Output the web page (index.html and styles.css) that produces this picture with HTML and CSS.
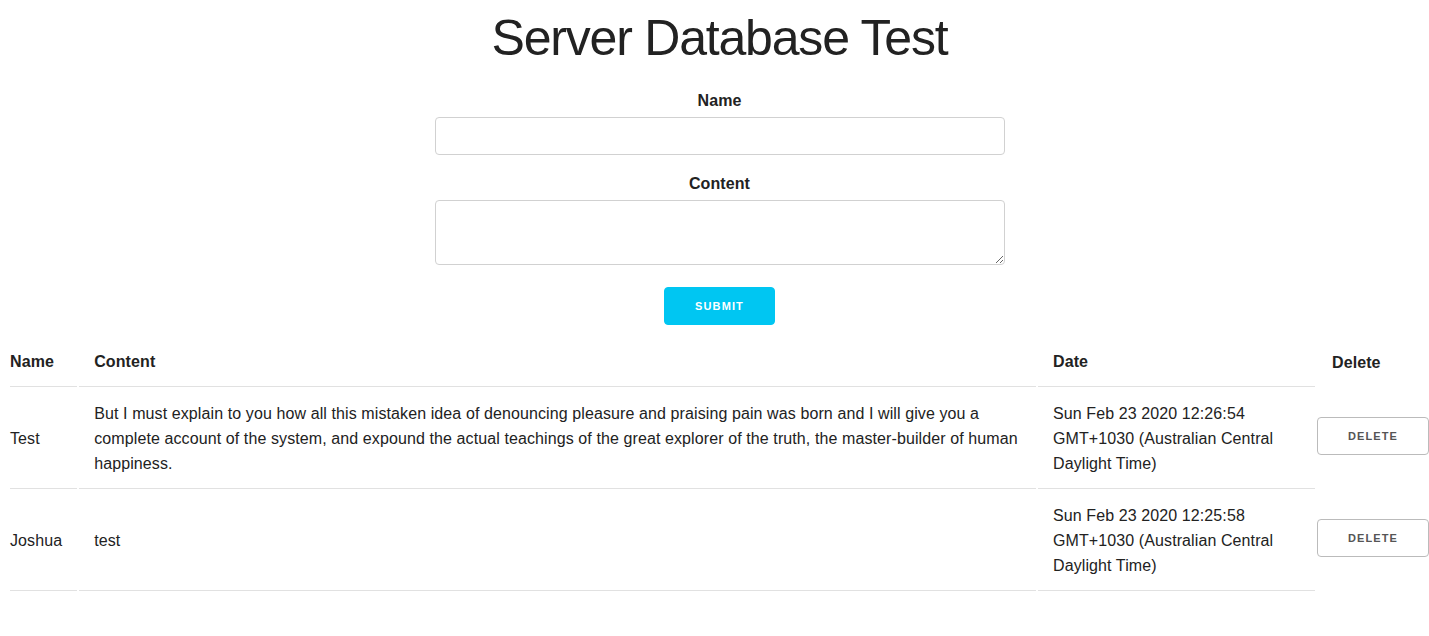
FILE: index.html
```html
<!DOCTYPE html>
<html lang="en">
<head>
<meta charset="utf-8">
<title>Server Database Test</title>
<link rel="stylesheet" href="styles.css">
</head>
<body>
<div class="page">
  <h1 class="title">Server Database Test</h1>
  <form class="entry-form">
    <label class="field-label" for="name">Name</label>
    <input class="field-input" id="name" type="text">
    <label class="field-label" for="content">Content</label>
    <textarea class="field-textarea" id="content"></textarea>
    <button class="btn btn-primary" type="button">Submit</button>
  </form>
  <table class="entries">
    <thead>
      <tr>
        <th class="col-name">Name</th>
        <th class="col-content">Content</th>
        <th class="col-date">Date</th>
        <th class="col-delete">Delete</th>
      </tr>
    </thead>
    <tbody>
      <tr>
        <td class="col-name">Test</td>
        <td class="col-content">But I must explain to you how all this mistaken idea of denouncing pleasure and praising pain was born and I will give you a complete account of the system, and expound the actual teachings of the great explorer of the truth, the master-builder of human happiness.</td>
        <td class="col-date">Sun Feb 23 2020 12:26:54 GMT+1030 (Australian Central Daylight Time)</td>
        <td class="col-delete"><button class="btn" type="button">Delete</button></td>
      </tr>
      <tr>
        <td class="col-name">Joshua</td>
        <td class="col-content">test</td>
        <td class="col-date">Sun Feb 23 2020 12:25:58 GMT+1030 (Australian Central Daylight Time)</td>
        <td class="col-delete"><button class="btn" type="button">Delete</button></td>
      </tr>
    </tbody>
  </table>
</div>
</body>
</html>
```
FILE: styles.css
```css
html {
  overflow: hidden;
}
body {
  margin: 0;
  font-family: "Liberation Sans", Arial, Helvetica, sans-serif;
  font-size: 16px;
  line-height: 24px;
  letter-spacing: 0.1px;
  color: #222;
  background: #fff;
}
.page {
  width: 1423px;
  padding: 8px 0 0 8px;
}
.title {
  margin: 0 0 20px;
  font-size: 50px;
  line-height: 60px;
  font-weight: 400;
  letter-spacing: -1.2px;
  text-align: center;
  color: #222;
}
.entry-form {
  display: flex;
  flex-direction: column;
  align-items: center;
}
.field-label {
  display: block;
  font-weight: 700;
  line-height: 24px;
  padding-top: 1px;
  margin-bottom: 4px;
}
.field-input,
.field-textarea {
  width: 570px;
  box-sizing: border-box;
  border: 1px solid #d1d1d1;
  border-radius: 4px;
  background: #fff;
  font: inherit;
  padding: 6px 10px;
  margin: 0;
}
.field-input {
  height: 38px;
  margin-bottom: 16px;
}
.field-textarea {
  height: 65px;
  resize: vertical;
}
.btn {
  display: inline-block;
  box-sizing: border-box;
  height: 38px;
  padding: 0 30px;
  margin: 0;
  font-family: "Liberation Sans", Arial, Helvetica, sans-serif;
  font-size: 11px;
  font-weight: 700;
  line-height: 36px;
  letter-spacing: 1.1px;
  text-transform: uppercase;
  color: #555;
  background: transparent;
  border: 1px solid #bbb;
  border-radius: 4px;
  cursor: pointer;
}
.btn-primary {
  margin-top: 22px;
  color: #fff;
  background: #00c6f2;
  border-color: #00c6f2;
}
.entries {
  margin-top: 11px;
  width: 1423px;
  border-spacing: 2px;
}
.entries th,
.entries td {
  text-align: left;
  padding: 12px 15px;
  border-bottom: 1px solid #e1e1e1;
  vertical-align: middle;
}
.entries th {
  font-weight: 700;
  line-height: 24px;
}
.entries td {
  line-height: 25px;
}
.entries .col-name {
  padding-left: 0;
  width: 52px;
}
.entries .col-date {
  width: 247px;
}
.entries th.col-delete {
  border-bottom: none;
  padding-right: 0;
  width: 95px;
}
.entries td.col-delete {
  border-bottom: none;
  padding: 0 0 7px;
}
```
